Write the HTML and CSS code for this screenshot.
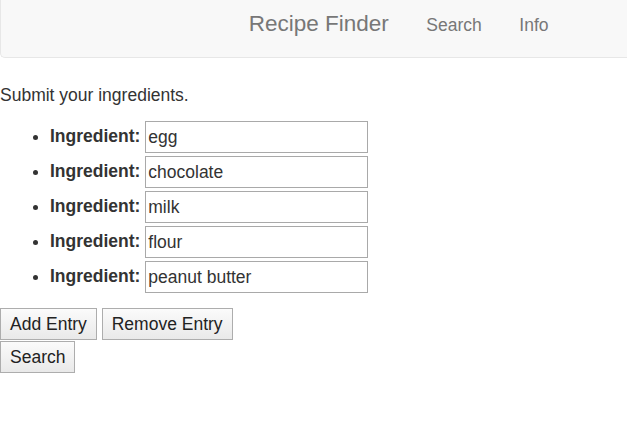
FILE: index.html
```html
<!DOCTYPE html>
<html>
<head>
<meta charset="utf-8">
<link rel="stylesheet" href="styles.css">
</head>
<body>
<nav class="navbar">
  <a class="brand">Recipe Finder</a>
  <a class="nav-link">Search</a>
  <a class="nav-link">Info</a>
</nav>
<p class="intro">Submit your ingredients.</p>
<ul class="ingredients">
  <li><label>Ingredient:</label> <input type="text" value="egg"></li>
  <li><label>Ingredient:</label> <input type="text" value="chocolate"></li>
  <li><label>Ingredient:</label> <input type="text" value="milk"></li>
  <li><label>Ingredient:</label> <input type="text" value="flour"></li>
  <li><label>Ingredient:</label> <input type="text" value="peanut butter"></li>
</ul>
<div class="actions">
  <button class="btn">Add Entry</button> <button class="btn">Remove Entry</button><br>
  <button class="btn">Search</button>
</div>
</body>
</html>
```
FILE: styles.css
```css
html, body {
  margin: 0;
  overflow: hidden;
}
body {
  font-family: "Liberation Sans", Arial, sans-serif;
  font-size: 17.5px;
  line-height: 25px;
  color: #333;
  background: #fff;
}
.navbar {
  display: flex;
  align-items: baseline;
  height: 46px;
  padding: 11px 0 0 229px;
  margin-right: -20px;
  background: #f8f8f8;
  border-left: 1px solid #e7e7e7;
  border-bottom: 1px solid #e7e7e7;
  border-bottom-left-radius: 5px;
  margin-bottom: 25px;
}
.brand {
  font-size: 22.5px;
  line-height: 25px;
  color: #777;
  padding: 0 18.75px;
}
.nav-link {
  font-size: 17.5px;
  line-height: 25px;
  color: #777;
  padding: 0 18.75px;
}
.intro {
  margin: 0 0 11.5px;
}
.ingredients {
  margin: 0 0 13.5px;
  padding-left: 50px;
}
.ingredients li {
  line-height: 25px;
}
.ingredients label {
  font-weight: bold;
}
.ingredients input {
  box-sizing: border-box;
  width: 223px;
  height: 32px;
  margin: 1.5px 0 1.5px 0;
  padding: 0 2px;
  border: 1px solid #a9a9a9;
  font-family: inherit;
  font-size: 17.5px;
  color: #333;
  vertical-align: middle;
}
.actions {
  line-height: 0;
}
.btn {
  box-sizing: border-box;
  height: 32px;
  padding: 0 9px;
  margin: 0;
  border: 1px solid #adadad;
  border-radius: 0;
  background: linear-gradient(#fbfbfb, #e9e9e9);
  font-family: inherit;
  font-size: 17.5px;
  color: #222;
  vertical-align: top;
}
.btn + br + .btn {
  margin-top: 1px;
}
```
